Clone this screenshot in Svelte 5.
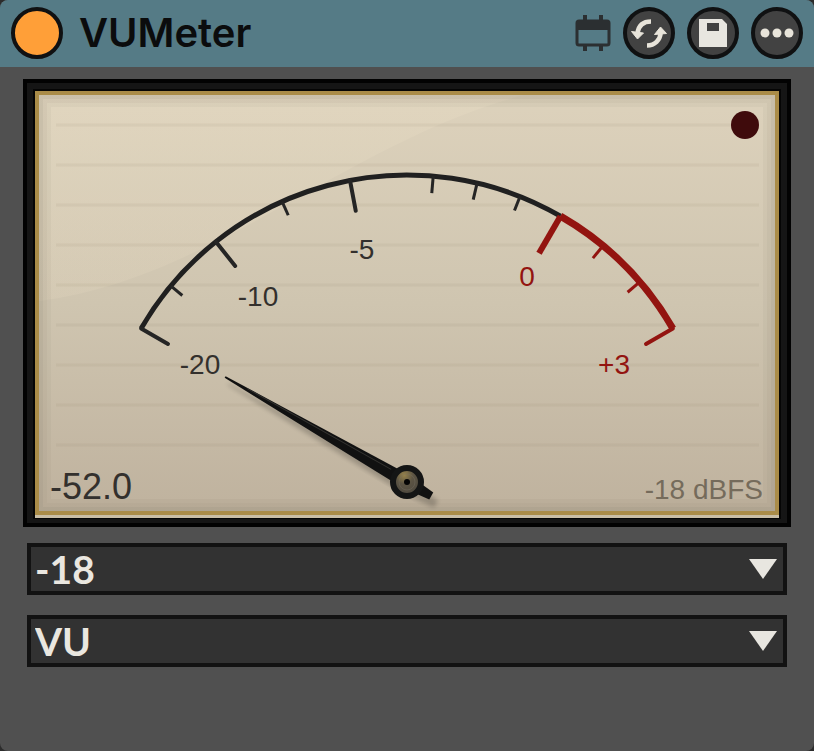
<script lang="ts">
  interface Tick {
    angle: number;
    length: number;
    width: number;
    label?: string;
    x?: number;
    y?: number;
    hot?: boolean;
  }

  // Needle pivot and arc radius in face units
  const cx = 384;
  const cy = 403;
  const radius = 307;

  const ticks: Tick[] = [
    { angle: -60, length: 31, width: 4, label: "-20", x: 177, y: 295 },
    { angle: -50.3, length: 15, width: 3 },
    { angle: -38.5, length: 31, width: 4, label: "-10", x: 235, y: 227 },
    { angle: -24, length: 15, width: 3 },
    { angle: -10.7, length: 31, width: 4, label: "-5", x: 339, y: 180 },
    { angle: 4.9, length: 17, width: 3 },
    { angle: 13.2, length: 17, width: 3 },
    { angle: 21.6, length: 15, width: 3 },
    { angle: 30, length: 43, width: 6, label: "0", x: 504, y: 207, hot: true },
    { angle: 39.7, length: 16, width: 3, hot: true },
    { angle: 49.3, length: 16, width: 3, hot: true },
    { angle: 60, length: 31, width: 4, label: "+3", x: 591, y: 295, hot: true },
  ];

  const lines = [46, 86, 126, 166, 206, 246, 286, 326, 366];

  let enabled = $state(true);
  let reference = $state("-18");
  let mode = $state("VU");
  let level = $state(-52);

  // The needle rests on the -20 mark for anything quieter
  let needle = $derived(level <= -20 ? -60 : Math.min(60, level * 3 + 30));

  function point(angle: number, r: number) {
    const a = (angle * Math.PI) / 180;
    return { x: cx + r * Math.sin(a), y: cy - r * Math.cos(a) };
  }

  function arc(from: number, to: number) {
    const a = point(from, radius);
    const b = point(to, radius);
    return `M${a.x} ${a.y}A${radius} ${radius} 0 0 1 ${b.x} ${b.y}`;
  }
</script>

<main class="device">
  <header>
    <button
      class="power"
      class:off={!enabled}
      aria-label="Device on/off"
      aria-pressed={enabled}
      onclick={() => (enabled = !enabled)}
    ></button>
    <h1>VUMeter</h1>

    <button class="plain" aria-label="Open window">
      <svg width="36" height="36" viewBox="0 0 36 36">
        <path d="M10 0v6M26 0v6M10 30v6M26 30v6" stroke="#2b2f31" stroke-width="4" />
        <rect x="2" y="6" width="32" height="24" rx="2" fill="none" stroke="#2b2f31" stroke-width="3" />
        <path d="M2 6h32v9H2z" fill="#2b2f31" />
      </svg>
    </button>
    <button class="round" aria-label="Swap">
      <svg width="44" height="44" viewBox="0 0 44 44">
        <g fill="none" stroke="#e8e4da" stroke-width="4.5">
          <path d="M24 10.500C16 10.500 11.500 15 10.500 22" />
          <path d="M20 34.500C28 34.500 33 29 33.700 22" />
        </g>
        <path
          d="M4.500 20.500l12 1.500-6 6z M39.500 22.500l-12 1 6-7.500z"
          fill="#e8e4da"
          stroke="#e8e4da"
          stroke-linejoin="round"
        />
      </svg>
    </button>
    <button class="round" aria-label="Save">
      <svg width="44" height="44" viewBox="0 0 44 44">
        <path fill-rule="evenodd" d="M8 8h23l5 5v23H8z M16 12v8h12v-8z" fill="#e8e6e0" />
      </svg>
    </button>
    <button class="round" aria-label="More">
      <svg width="44" height="44" viewBox="0 0 44 44" fill="#e8e4da">
        <circle cx="10" cy="22" r="4.5" />
        <circle cx="22" cy="22" r="4.5" />
        <circle cx="34" cy="22" r="4.5" />
      </svg>
    </button>
  </header>

  <div class="body">
    <svg class="meter" viewBox="0 0 768 448" role="img" aria-label="VU meter">
      <defs>
        <linearGradient id="face" x1="0" y1="0" x2="0" y2="1">
          <stop offset="0" stop-color="#ddd2bc" />
          <stop offset="0.5" stop-color="#cfc5b0" />
          <stop offset="1" stop-color="#bfb29e" />
        </linearGradient>
        <linearGradient id="glare" x1="0" y1="0" x2="0" y2="1">
          <stop offset="0" stop-color="#fff0d4" stop-opacity="0.12" />
          <stop offset="1" stop-color="#fff0d4" stop-opacity="0.1" />
        </linearGradient>
        <radialGradient id="hub" cx="0.4" cy="0.25" r="0.8">
          <stop offset="0" stop-color="#98834a" />
          <stop offset="0.4" stop-color="#5c5444" />
          <stop offset="1" stop-color="#4b463d" />
        </radialGradient>
        <filter id="soft">
          <feGaussianBlur stdDeviation="2" />
        </filter>
      </defs>

      <rect width="768" height="448" fill="#020202" />
      <rect x="4" y="4" width="760" height="440" fill="#151515" />
      <rect x="10" y="10" width="748" height="430" fill="#050505" />
      <rect x="12" y="12" width="744" height="427" fill="#c9bea6" />
      <rect x="14" y="14" width="740" height="420" fill="url(#face)" stroke="#aa8c48" stroke-width="4" />
      <path d="M16 16H500C320 65 190 200 16 222z" fill="url(#glare)" />

      <g fill="none" stroke="#6b6252">
        <rect x="18" y="18" width="732" height="412" stroke-width="4" stroke-opacity="0.18" />
        <rect x="22" y="22" width="724" height="404" stroke-width="4" stroke-opacity="0.11" />
        <rect x="26" y="26" width="716" height="396" stroke-width="4" stroke-opacity="0.05" />
      </g>
      <g stroke="#7b705e" stroke-opacity="0.08" stroke-width="3">
        {#each lines as y}
          <line x1="33" x2="736" y1={y} y2={y} />
        {/each}
      </g>

      <path d={arc(-60, 30)} fill="none" stroke="#202020" stroke-width="5" />
      <path d={arc(30, 60)} fill="none" stroke="#931410" stroke-width="7" />
      {#each ticks as tick}
        {@const a = point(tick.angle, radius)}
        {@const b = point(tick.angle, radius - tick.length)}
        <line
          class:hot={tick.hot}
          x1={a.x}
          y1={a.y}
          x2={b.x}
          y2={b.y}
          stroke-width={tick.width}
          stroke-linecap={tick.label && tick.label !== "0" ? "round" : "butt"}
        />
        {#if tick.label}
          <text class:hot={tick.hot} x={tick.x} y={tick.y}>{tick.label}</text>
        {/if}
      {/each}

      <g transform="translate(387 410) rotate({needle})" opacity="0.2" filter="url(#soft)">
        <path d="M-1-210h2L7 0 4 30h-8L-7 0z" fill="#000" />
      </g>
      <g transform="translate({cx} {cy}) rotate({needle})">
        <path d="M-1-210h2L7-10V0L4 28h-8L-7 0v-10z" fill="#111" />
        <path d="M1-185L3-20" stroke="#33322f" stroke-width="1" />
      </g>
      <circle {cx} {cy} r="14" fill="url(#hub)" stroke="#141515" stroke-width="6" />
      <circle {cx} {cy} r="8" fill="none" stroke="#777063" stroke-opacity="0.4" />
      <circle {cx} {cy} r="3" fill="#050505" />

      <circle cx="722" cy="46" r="14" fill="#3f0b0c" />
      <text class="level" x="27" y="420">{level.toFixed(1)}</text>
      <text class="reference" x="740" y="420">{reference} dBFS</text>
    </svg>

    <div class="menu">
      <select aria-label="Reference level" bind:value={reference}>
        <option>-18</option>
        <option>-20</option>
        <option>-14</option>
      </select>
    </div>
    <div class="menu">
      <select aria-label="Meter mode" bind:value={mode}>
        <option>VU</option>
        <option>PPM</option>
      </select>
    </div>
  </div>
</main>

<style>
  :global(body) {
    margin: 0;
    background: #2c2c2c;
  }

  .device {
    min-height: 100vh;
    background: #505050;
    border-radius: 8px;
    overflow: hidden;
  }

  header {
    display: flex;
    align-items: center;
    gap: 12px;
    padding: 7px 11px 8px;
    background: #557b86;
  }

  h1 {
    flex: 1;
    margin: 0 0 0 4px;
    font: 600 40px/52px Inter, sans-serif;
    color: #0b0c0d;
  }

  button {
    flex: none;
    display: grid;
    place-items: center;
    box-sizing: border-box;
    padding: 0;
    border: 0;
    background: none;
    cursor: pointer;
  }

  .power,
  .round {
    width: 52px;
    height: 52px;
    border: 4px solid #101112;
    border-radius: 50%;
    background: #424242;
  }

  .power {
    background: #ff9f38;
  }

  .power.off {
    background: #424242;
  }

  .body {
    display: flex;
    flex-direction: column;
    gap: 20px;
    padding: 12px 23px;
  }

  .meter {
    display: block;
    width: 100%;
    margin-bottom: -4px;
  }

  .meter line[stroke-linecap] {
    stroke: #252525;
  }

  .meter line.hot {
    stroke: #931410;
  }

  .meter text {
    font: 28px "Liberation Sans", Arial, sans-serif;
    fill: #33302d;
    text-anchor: middle;
  }

  .meter text.hot {
    fill: #931410;
  }

  .meter text.level {
    font-size: 36px;
    text-anchor: start;
  }

  .meter text.reference {
    fill: #756b5b;
    text-anchor: end;
  }

  .menu {
    display: grid;
    align-items: center;
    margin: 0 4px;
  }

  .menu select,
  .menu::after {
    grid-area: 1 / 1;
  }

  .menu::after {
    content: "";
    justify-self: end;
    width: 28px;
    height: 20px;
    margin-right: 10px;
    background: #e8e6e0;
    clip-path: polygon(0 0, 100% 0, 50% 100%);
    pointer-events: none;
  }

  select {
    appearance: none;
    box-sizing: border-box;
    width: 100%;
    height: 52px;
    padding: 0 44px 0 4px;
    border: 4px solid #121212;
    border-radius: 0;
    background: #323232;
    color: #eae7e0;
    font: 700 39px/44px Lato, sans-serif;
  }
</style>
